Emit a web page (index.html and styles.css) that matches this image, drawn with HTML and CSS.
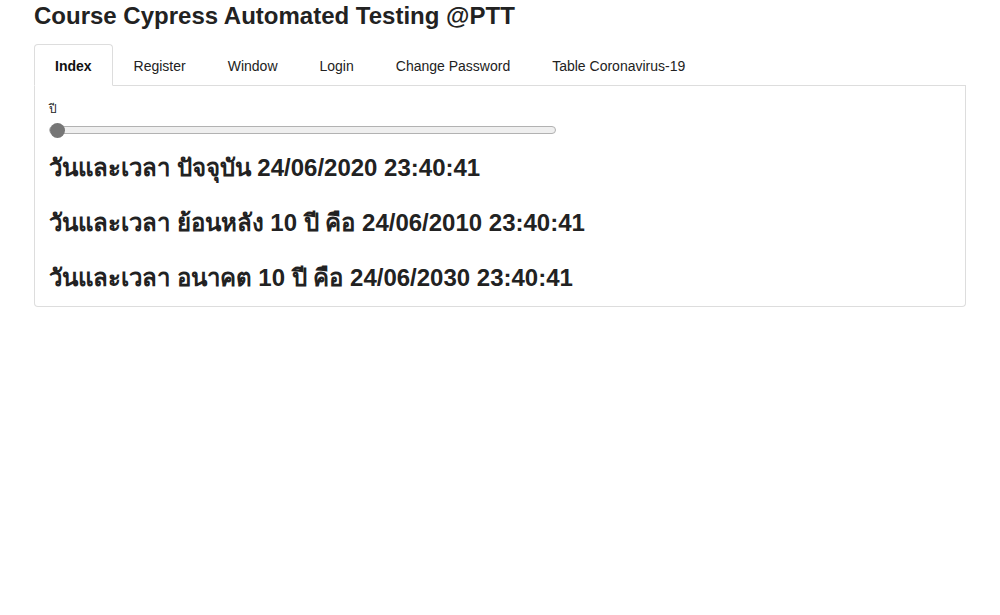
FILE: index.html
```html
<!DOCTYPE html>
<html lang="th">
<head>
<meta charset="utf-8">
<title>Course Cypress Automated Testing @PTT</title>
<link rel="stylesheet" href="styles.css">
</head>
<body>
<div class="container">
  <h1 class="title">Course Cypress Automated Testing @PTT</h1>
  <ul class="tabs">
    <li class="tab active">Index</li>
    <li class="tab">Register</li>
    <li class="tab">Window</li>
    <li class="tab">Login</li>
    <li class="tab">Change Password</li>
    <li class="tab">Table Coronavirus-19</li>
  </ul>
  <div class="panel">
    <label class="label" for="year">ปี</label>
    <input id="year" class="slider" type="range" min="0" max="100" value="0">
    <h3 class="line">วันและเวลา ปัจจุบัน 24/06/2020 23:40:41</h3>
    <h3 class="line">วันและเวลา ย้อนหลัง 10 ปี คือ 24/06/2010 23:40:41</h3>
    <h3 class="line">วันและเวลา อนาคต 10 ปี คือ 24/06/2030 23:40:41</h3>
  </div>
</div>
</body>
</html>
```
FILE: styles.css
```css
html, body {
  margin: 0;
  padding: 0;
  background: #fff;
}
body {
  font-family: "Liberation Sans", Arial, "DejaVu Sans", sans-serif;
  color: #222;
}
.container {
  padding: 0 34px;
}
.title {
  margin: 0;
  padding-top: 2px;
  font-size: 24px;
  line-height: 28px;
  font-weight: bold;
  color: #222;
  height: 42px;
}
.tabs {
  list-style: none;
  margin: 0;
  padding: 0;
  display: flex;
  border-bottom: 1px solid #ddd;
}
.tab {
  padding: 11px 20px 9px;
  line-height: 20px;
  font-size: 14px;
  border: 1px solid transparent;
  border-radius: 4px 4px 0 0;
  margin-bottom: -1px;
  color: #222;
}
.tab.active {
  font-weight: bold;
  border-color: #ddd #ddd #fff;
  background: #fff;
  color: #111;
}
.panel {
  border: 1px solid #ddd;
  border-top: none;
  border-radius: 0 0 4px 4px;
  padding: 15px 14px 12px;
  display: flex;
  flex-direction: column;
  align-items: flex-start;
}
.label {
  font-size: 12px;
  line-height: 16px;
}
.slider {
  -webkit-appearance: none;
  appearance: none;
  width: 507px;
  height: 8px;
  margin: 9px 0 0;
  background: #efefef;
  border: 1px solid #b2b2b2;
  border-radius: 4px;
  box-sizing: border-box;
}
.slider::-webkit-slider-thumb {
  -webkit-appearance: none;
  appearance: none;
  width: 15px;
  height: 15px;
  border-radius: 50%;
  background: #767676;
  border: none;
}
.line {
  margin: 0;
  font-size: 24px;
  line-height: 32px;
  font-weight: bold;
  color: #222;
  margin-top: 23px;
}
.line:first-of-type {
  margin-top: 18px;
}
```
